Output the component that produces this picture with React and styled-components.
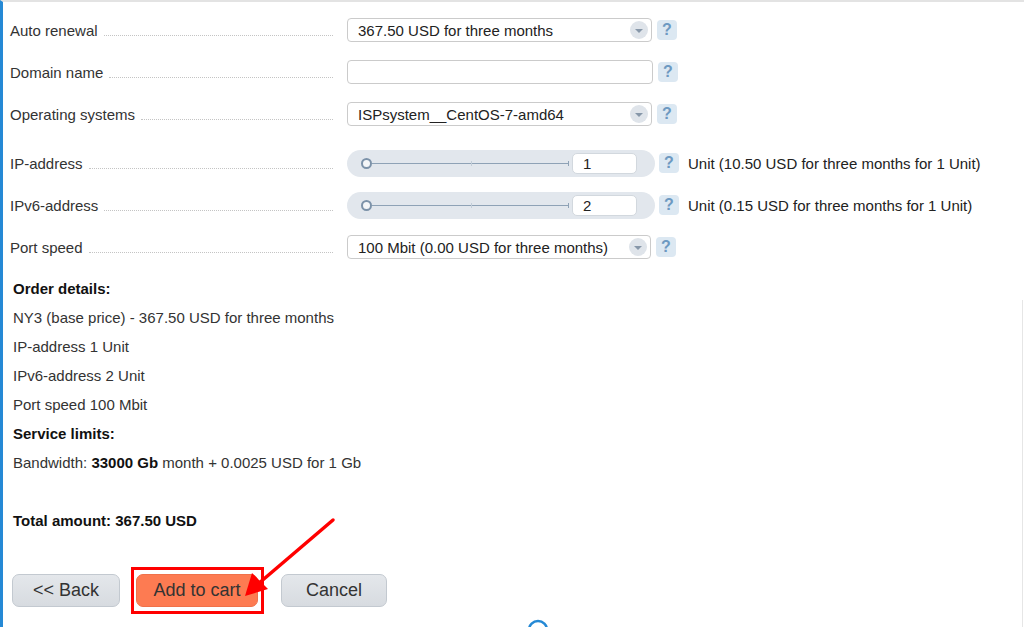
import React from "react";
import styled, { createGlobalStyle } from "styled-components";

const Global = createGlobalStyle`
  html, body { margin: 0; padding: 0; background: #fff; }
  * { box-sizing: border-box; }
`

const Page = styled.div`
  position: relative;
  height: 627px;
  overflow: hidden;
  border-left: 3px solid #2589d5;
  border-top: 2px solid #e3e3e3;
  padding: 7px 0 0 7px;
  font-family: "Liberation Sans", Arial, sans-serif;
  font-size: 15px;
  color: #333;

  &::after {
    content: "";
    position: absolute;
    right: 1px;
    top: 298px;
    bottom: 0;
    width: 1px;
    background: #e6e6e6;
  }
`

const Row = styled.div`
  display: flex;
  align-items: center;
  height: 42px;
  margin-top: ${p => p.$gap || 0}px;
`

const Label = styled.div`
  width: 337px;
  flex-shrink: 0;
  display: flex;
  align-items: baseline;
`

const Leader = styled.span`
  flex: 1;
  border-bottom: 1px dotted #c4c4c4;
  margin: 0 14px 0 6px;
`

const Select = styled.div`
  width: ${p => p.$w || 305}px;
  height: 24px;
  border: 1px solid #cbcbcb;
  border-radius: 4px;
  background: #fff;
  display: flex;
  align-items: center;
  justify-content: space-between;
  padding: 0 3px 0 10px;
  color: #222;
`

const Knob = styled.span`
  width: 18px;
  height: 18px;
  border-radius: 50%;
  background: #dfe4ea;
  display: flex;
  align-items: center;
  justify-content: center;

  &::before {
    content: "";
    border-left: 4px solid transparent;
    border-right: 4px solid transparent;
    border-top: 4px solid #8797a9;
    margin-top: 1px;
  }
`

const TextInput = styled.div`
  width: 306px;
  height: 24px;
  border: 1px solid #cbcbcb;
  border-radius: 4px;
  background: #fff;
`

const Help = styled.span`
  width: 20px;
  height: 20px;
  margin-left: ${p => p.$ml || 5}px;
  border-radius: 4px;
  background: #dce8f2;
  color: #6d99c1;
  font-weight: bold;
  font-size: 16px;
  display: flex;
  align-items: center;
  justify-content: center;
`

const Slider = styled.div`
  width: 308px;
  height: 27px;
  border-radius: 14px;
  background: #e2e7ed;
  display: flex;
  align-items: center;
  padding: 0 18px 0 14px;
`

const Handle = styled.span`
  width: 11px;
  height: 11px;
  border-radius: 50%;
  border: 2px solid #7c92a9;
  background: #f4f6f8;
  flex-shrink: 0;
`

const Track = styled.span`
  flex: 1;
  height: 1px;
  background: #8ea2b6;
  position: relative;

  &::before, &::after {
    content: "";
    position: absolute;
    width: 1px;
    height: 5px;
    top: -2px;
    background: #8ea2b6;
  }
  &::before { left: 50%; background: #c3ced9; }
  &::after { right: 0; }
`

const NumberBox = styled.div`
  width: 65px;
  height: 21px;
  margin-left: 3px;
  border-radius: 5px;
  border: 1px solid #d2d8de;
  background: #fff;
  padding-left: 10px;
  display: flex;
  align-items: center;
  color: #222;
`

const Unit = styled.span`
  margin-left: 9px;
  color: #222;
`

const Summary = styled.div`
  margin-top: 6px;
  padding-left: 3px;
  line-height: 29px;
  color: #333;
`

const Line = styled.div`
  font-weight: ${p => (p.$bold ? "bold" : "normal")};
  color: ${p => (p.$bold ? "#111" : "#333")};
  margin-top: ${p => p.$gap || 0}px;
`

const Strong = styled.b`
  color: #111;
`

const Buttons = styled.div`
  display: flex;
  align-items: center;
  margin: 32px 0 0 2px;
`

const Button = styled.button`
  height: 33px;
  width: ${p => p.$w}px;
  border: 1px solid #c3c9d0;
  border-radius: 7px;
  background: ${p => (p.$primary ? "#fd7b52" : "linear-gradient(#e4e7eb, #d7dbe0)")};
  border-color: ${p => (p.$primary ? "#f0714a" : "#c3c9d0")};
  font-family: "Liberation Sans", Arial, sans-serif;
  font-size: 18px;
  color: #333;
  padding: 0;
`

const Highlight = styled.span`
  display: flex;
  border: 3px solid #ff0000;
  padding: 4px 3px 4px 2px;
  margin: 0 17px 0 11px;
`

const Overlay = styled.svg`
  position: absolute;
  left: -3px;
  top: -2px;
  pointer-events: none;
`

const Spinner = styled.svg`
  position: absolute;
  left: 521px;
  bottom: -17px;
`

const fields = [
  { label: "Auto renewal", kind: "select", value: "367.50 USD for three months" },
  { label: "Domain name", kind: "input" },
  { label: "Operating systems", kind: "select", value: "ISPsystem__CentOS-7-amd64" },
  { label: "IP-address", kind: "slider", value: "1", unit: "Unit (10.50 USD for three months for 1 Unit)", gap: 7 },
  { label: "IPv6-address", kind: "slider", value: "2", unit: "Unit (0.15 USD for three months for 1 Unit)" },
  { label: "Port speed", kind: "select", value: "100 Mbit (0.00 USD for three months)", w: 304 },
]

function Field({ f }) {
  return (
    <Row $gap={f.gap}>
      <Label>
        {f.label}
        <Leader />
      </Label>
      {f.kind === "select" && (
        <Select $w={f.w}>
          {f.value}
          <Knob />
        </Select>
      )}
      {f.kind === "input" && <TextInput />}
      {f.kind === "slider" && (
        <Slider>
          <Handle />
          <Track />
          <NumberBox>{f.value}</NumberBox>
        </Slider>
      )}
      <Help $ml={f.kind === "slider" ? 4 : 5}>?</Help>
      {f.unit && <Unit>{f.unit}</Unit>}
    </Row>
  )
}

export default function App() {
  return (
    <Page>
      <Global />
      {fields.map(f => <Field key={f.label} f={f} />)}

      <Summary>
        <Line $bold>Order details:</Line>
        <Line>NY3 (base price) - 367.50 USD for three months</Line>
        <Line>IP-address 1 Unit</Line>
        <Line>IPv6-address 2 Unit</Line>
        <Line>Port speed 100 Mbit</Line>
        <Line $bold>Service limits:</Line>
        <Line>Bandwidth: <Strong>33000 Gb</Strong> month + 0.0025 USD for 1 Gb</Line>
        <Line $bold $gap={29}>Total amount: 367.50 USD</Line>
      </Summary>

      <Buttons>
        <Button $w={108}>&lt;&lt; Back</Button>
        <Highlight>
          <Button $w={122} $primary>Add to cart</Button>
        </Highlight>
        <Button $w={106}>Cancel</Button>
      </Buttons>

      <Overlay width="1024" height="627" viewBox="0 0 1024 627">
        <line x1="333" y1="520" x2="258" y2="584" stroke="#f00" strokeWidth="3.5" strokeLinecap="round" />
        <polygon points="245,596 252,573 268,589" fill="#f00" />
      </Overlay>

      <Spinner width="28" height="28" viewBox="0 0 28 28">
        <circle cx="14" cy="14" r="9" fill="none" stroke="#2589d5" strokeWidth="2.5" />
      </Spinner>
    </Page>
  )
}
